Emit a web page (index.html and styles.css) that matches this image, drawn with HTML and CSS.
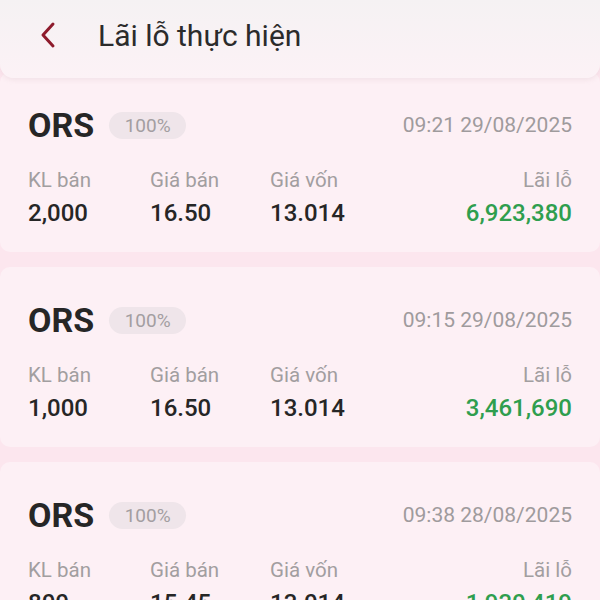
FILE: index.html
```html
<!DOCTYPE html>
<html lang="vi">
<head>
<meta charset="utf-8">
<link rel="stylesheet" href="styles.css">
</head>
<body>
<header class="topbar">
  <span class="back">
    <svg width="20" height="28" viewBox="0 0 20 28"><path d="M15 3 L5 14 L15 25" fill="none" stroke="#8e1b2c" stroke-width="3" stroke-linecap="round" stroke-linejoin="round"/></svg>
  </span>
  <h1 class="title">Lãi lỗ thực hiện</h1>
</header>
<main class="list">
  <section class="card">
    <div class="row-top">
      <span class="sym">ORS</span>
      <span class="badge">100%</span>
      <span class="date">09:21 29/08/2025</span>
    </div>
    <div class="grid">
      <div class="cell"><span class="lbl">KL bán</span><span class="val">2,000</span></div>
      <div class="cell"><span class="lbl">Giá bán</span><span class="val">16.50</span></div>
      <div class="cell"><span class="lbl">Giá vốn</span><span class="val">13.014</span></div>
      <div class="cell right"><span class="lbl">Lãi lỗ</span><span class="val pos">6,923,380</span></div>
    </div>
  </section>
  <section class="card">
    <div class="row-top">
      <span class="sym">ORS</span>
      <span class="badge">100%</span>
      <span class="date">09:15 29/08/2025</span>
    </div>
    <div class="grid">
      <div class="cell"><span class="lbl">KL bán</span><span class="val">1,000</span></div>
      <div class="cell"><span class="lbl">Giá bán</span><span class="val">16.50</span></div>
      <div class="cell"><span class="lbl">Giá vốn</span><span class="val">13.014</span></div>
      <div class="cell right"><span class="lbl">Lãi lỗ</span><span class="val pos">3,461,690</span></div>
    </div>
  </section>
  <section class="card">
    <div class="row-top">
      <span class="sym">ORS</span>
      <span class="badge">100%</span>
      <span class="date">09:38 28/08/2025</span>
    </div>
    <div class="grid">
      <div class="cell"><span class="lbl">KL bán</span><span class="val">800</span></div>
      <div class="cell"><span class="lbl">Giá bán</span><span class="val">15.45</span></div>
      <div class="cell"><span class="lbl">Giá vốn</span><span class="val">13.014</span></div>
      <div class="cell right"><span class="lbl">Lãi lỗ</span><span class="val pos">1,930,419</span></div>
    </div>
  </section>
</main>
</body>
</html>
```
FILE: styles.css
```css
* { box-sizing: border-box; }
html, body { margin: 0; padding: 0; }
body {
  width: 600px;
  height: 600px;
  overflow: hidden;
  background: #fce6ee;
  font-family: Roboto, "Noto Sans", sans-serif;
}
.topbar {
  position: relative;
  z-index: 2;
  height: 78px;
  display: flex;
  align-items: center;
  padding: 0 0 8px 38px;
  background: linear-gradient(#f5f2f3, #fcf2f6);
  border-radius: 0 0 14px 14px;
  box-shadow: 0 2px 5px rgba(200, 170, 180, 0.2);
}
.back { display: flex; width: 20px; height: 28px; }
.title {
  margin: 0 0 0 40px;
  font-size: 30px;
  font-weight: 400;
  color: #2b2b2b;
}
.list {
  margin-top: -6px;
  display: flex;
  flex-direction: column;
  gap: 15px;
}
.card {
  height: 180px;
  background: #fdf0f5;
  padding: 38px 28px 0 28px;
  border-radius: 10px;
}
.row-top {
  display: flex;
  align-items: center;
  height: 30px;
}
.sym {
  font-size: 34px;
  font-weight: 700;
  color: #262626;
}
.badge {
  margin-left: 15px;
  height: 27px;
  width: 77px;
  border-radius: 14px;
  background: #efe5ea;
  color: #a39ea1;
  font-size: 19px;
  display: flex;
  align-items: center;
  justify-content: center;
}
.date {
  margin-left: auto;
  font-size: 21px;
  color: #9f9b9d;
}
.grid {
  margin-top: 28px;
  display: grid;
  grid-template-columns: 122px 120px 1fr 1fr;
}
.cell { display: flex; flex-direction: column; }
.cell.right { align-items: flex-end; }
.lbl {
  font-size: 20.5px;
  color: #a29ea0;
  line-height: 24px;
}
.val {
  margin-top: 8px;
  font-size: 24px;
  font-weight: 500;
  color: #262626;
  line-height: 26px;
}
.val.pos { color: #2f9e4e; }
```
